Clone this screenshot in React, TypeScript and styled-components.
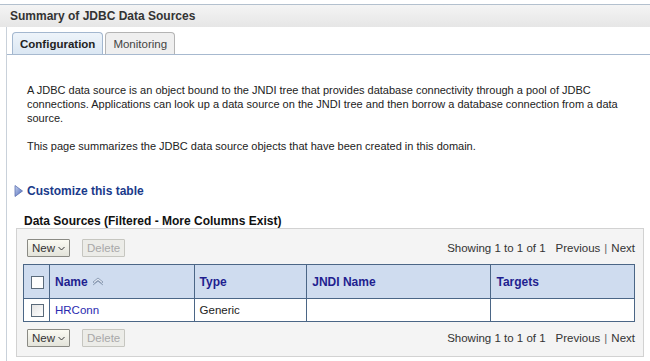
import React from 'react'
import styled, { createGlobalStyle } from 'styled-components'

const GlobalStyle = createGlobalStyle`
  html, body {
    margin: 0;
    padding: 0;
    background: #ffffff;
  }
  body {
    font-family: 'Liberation Sans', Arial, sans-serif;
    font-size: 11px;
    color: #222;
  }
`

const Page = styled.div`
  width: 650px;
  height: 361px;
  padding-top: 4px;
  box-sizing: border-box;
  overflow: hidden;
`

const TitleBar = styled.div`
  height: 22px;
  border-top: 1px solid #b3c0ce;
  background: linear-gradient(#f4f4f4, #e6e6e6);
  display: flex;
  align-items: center;
  padding-left: 10px;
  font-size: 12px;
  font-weight: bold;
  color: #333;
`

const Body = styled.div`
  margin-left: 6px;
  border-left: 1px solid #c9d1da;
  padding-top: 5px;
  height: 330px;
`

const TabRow = styled.div`
  display: flex;
  align-items: flex-end;
  gap: 2px;
  padding-left: 5px;
  border-bottom: 1px solid #a7b9cf;
`

const Tab = styled.div<{ active?: boolean }>`
  height: 21px;
  padding: 0 7px;
  display: flex;
  align-items: center;
  font-size: 11.5px;
  border: 1px solid ${p => (p.active ? '#a3b7cf' : '#b4b4b4')};
  border-bottom: none;
  border-radius: 4px 4px 0 0;
  background: ${p => (p.active ? 'linear-gradient(#eef4fa, #dbe7f3)' : '#efefef')};
  font-weight: ${p => (p.active ? 'bold' : 'normal')};
  color: ${p => (p.active ? '#222' : '#444')};
`

const Content = styled.div`
  padding: 28px 0 0 20px;
`

const Para = styled.p`
  margin: 0 0 14px 0;
  width: 600px;
  line-height: 14px;
  font-size: 11px;
  color: #222;
`

const CustomizeLink = styled.a`
  display: flex;
  align-items: center;
  gap: 4px;
  margin: 31px 0 0 -13px;
  font-size: 12px;
  font-weight: bold;
  color: #1a3a8a;
  text-decoration: none;
`

const SectionTitle = styled.div`
  margin: 16px 0 0 -3px;
  font-size: 12px;
  font-weight: bold;
  color: #111;
`

const Panel = styled.div`
  margin: 0 0 0 -11px;
  width: 628px;
  border: 1px solid #d2d2d2;
  background: #f4f4f4;
  padding: 10px 6px 9px 6px;
  box-sizing: border-box;
`

const Toolbar = styled.div`
  display: flex;
  align-items: center;
  gap: 12px;
  padding-left: 4px;
  height: 18px;
`

const Button = styled.button<{ disabled?: boolean }>`
  height: 18px;
  padding: 0 4px;
  font-family: 'Liberation Sans', Arial, sans-serif;
  font-size: 11.5px;
  border: 1px solid ${p => (p.disabled ? '#c6c6c0' : '#8a8a84')};
  background: ${p => (p.disabled ? '#ecece8' : 'linear-gradient(#fafaf2, #e3e3da)')};
  color: ${p => (p.disabled ? '#a8a8a8' : '#333')};
  display: flex;
  align-items: center;
  gap: 3px;
  border-radius: 1px;
`

const Pager = styled.div`
  margin-left: auto;
  padding-right: 2px;
  font-size: 11.5px;
  color: #333;
  display: flex;
  gap: 4px;
  align-items: center;
`

const PagerGap = styled.span`
  margin-left: 6px;
`

const Sep = styled.span`
  color: #666;
`

const Table = styled.table`
  border-collapse: collapse;
  width: 612px;
  margin: 7px 0;
  background: #fff;
`

const Th = styled.th<{ w: number }>`
  width: ${p => p.w}px;
  height: 34px;
  border: 1.5px solid #4b6686;
  background: #cfdcef;
  color: #1f1f8f;
  font-size: 12px;
  text-align: left;
  padding: 0 5px;
  box-sizing: border-box;
`

const Td = styled.td`
  height: 23px;
  border: 1.5px solid #4b6686;
  padding: 0 5px;
  font-size: 11.5px;
  color: #222;
  box-sizing: border-box;
`

const CheckBox = styled.span<{ header?: boolean }>`
  display: inline-block;
  width: 11px;
  height: 11px;
  border: 1px solid #5a6a7a;
  background: ${p => (p.header ? '#fdfdfd' : 'linear-gradient(135deg, #e4e4e4, #ffffff)')};
  vertical-align: middle;
  margin-left: 2px;
`

const NameLink = styled.a`
  color: #2a2ab0;
  text-decoration: none;
`

const HeadLabel = styled.span`
  display: inline-flex;
  align-items: center;
  gap: 4px;
`

function Triangle() {
  return (
    <svg width="9" height="12" viewBox="0 0 9 12">
      <defs>
        <linearGradient id="tri" x1="0" y1="0" x2="1" y2="1">
          <stop offset="0" stopColor="#c8d4f0" />
          <stop offset="1" stopColor="#4a66b8" />
        </linearGradient>
      </defs>
      <path d="M1 0.5 L8.5 6 L1 11.5 Z" fill="url(#tri)" stroke="#5a70b0" strokeWidth="0.8" />
    </svg>
  )
}

function SortIcon() {
  return (
    <svg width="12" height="9" viewBox="0 0 12 9">
      <path d="M1 5 L6 1 L11 5 L9.5 6.2 L6 3.4 L2.5 6.2 Z" fill="#dfe6f2" stroke="#7d8fa8" strokeWidth="0.8" />
      <path d="M1 8 L6 4.2 L11 8" fill="none" stroke="#7d8fa8" strokeWidth="0.8" />
    </svg>
  )
}

function Chevron() {
  return (
    <svg width="7" height="5" viewBox="0 0 7 5">
      <path d="M0.5 1 L3.5 4 L6.5 1" fill="none" stroke="#333" strokeWidth="1" />
    </svg>
  )
}

function ActionBar() {
  return (
    <Toolbar>
      <Button>
        New <Chevron />
      </Button>
      <Button disabled>Delete</Button>
      <Pager>
        <span>Showing 1 to 1 of 1</span>
        <PagerGap>Previous</PagerGap>
        <Sep>|</Sep>
        <span>Next</span>
      </Pager>
    </Toolbar>
  )
}

export default function App() {
  return (
    <Page>
      <GlobalStyle />
      <TitleBar>Summary of JDBC Data Sources</TitleBar>
      <Body>
        <TabRow>
          <Tab active>Configuration</Tab>
          <Tab>Monitoring</Tab>
        </TabRow>
        <Content>
          <Para>
            A JDBC data source is an object bound to the JNDI tree that provides database connectivity through a pool of JDBC
            connections. Applications can look up a data source on the JNDI tree and then borrow a database connection from a data
            source.
          </Para>
          <Para>This page summarizes the JDBC data source objects that have been created in this domain.</Para>
          <CustomizeLink href="#">
            <Triangle />
            Customize this table
          </CustomizeLink>
          <SectionTitle>Data Sources (Filtered - More Columns Exist)</SectionTitle>
          <Panel>
            <ActionBar />
            <Table>
              <thead>
                <tr>
                  <Th w={25}>
                    <CheckBox header />
                  </Th>
                  <Th w={145}>
                    <HeadLabel>
                      Name <SortIcon />
                    </HeadLabel>
                  </Th>
                  <Th w={113}>Type</Th>
                  <Th w={185}>JNDI Name</Th>
                  <Th w={144}>Targets</Th>
                </tr>
              </thead>
              <tbody>
                <tr>
                  <Td>
                    <CheckBox />
                  </Td>
                  <Td>
                    <NameLink href="#">HRConn</NameLink>
                  </Td>
                  <Td>Generic</Td>
                  <Td></Td>
                  <Td></Td>
                </tr>
              </tbody>
            </Table>
            <ActionBar />
          </Panel>
        </Content>
      </Body>
    </Page>
  )
}
